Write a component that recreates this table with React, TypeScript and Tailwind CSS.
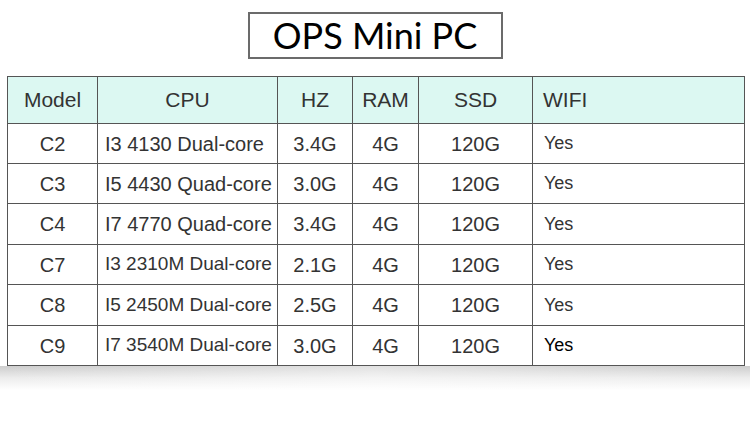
import React from "react";

const rows = [
  ["C2", "I3 4130 Dual-core", "3.4G", "4G", "120G", "Yes"],
  ["C3", "I5 4430 Quad-core", "3.0G", "4G", "120G", "Yes"],
  ["C4", "I7 4770 Quad-core", "3.4G", "4G", "120G", "Yes"],
  ["C7", "I3 2310M Dual-core", "2.1G", "4G", "120G", "Yes"],
  ["C8", "I5 2450M Dual-core", "2.5G", "4G", "120G", "Yes"],
  ["C9", "I7 3540M Dual-core", "3.0G", "4G", "120G", "Yes"],
];
const heights = ["h-[40px]", "h-[40px]", "h-[41px]", "h-[40px]", "h-[41px]", "h-[40px]"];

export default function App() {
  return (
    <div className="w-[750px] h-[432px] bg-white flex flex-col relative overflow-hidden">
      <div className="mx-auto mt-[12px] w-[255px] h-[47px] border-2 border-[#6b6b6b] flex items-center justify-center">
        <span className="text-[36px] leading-none text-black pb-[2px]" style={{ fontFamily: "Lato, 'Open Sans', sans-serif" }}>
          OPS Mini PC
        </span>
      </div>
      <div className="ml-[7px] mt-[17px] w-[738px]">
        <table
          className="border-collapse w-[738px] text-[#333] table-fixed"
          style={{ fontFamily: "'Liberation Sans', Arial, sans-serif" }}
        >
          <colgroup>
            <col className="w-[90px]" />
            <col className="w-[180px]" />
            <col className="w-[75px]" />
            <col className="w-[66px]" />
            <col className="w-[114px]" />
            <col className="w-[212px]" />
          </colgroup>
          <thead>
            <tr className="h-[47px] bg-[#dcf8f2] text-[21px]">
              <th className="border border-[#555] font-normal text-center">Model</th>
              <th className="border border-[#555] font-normal text-center">CPU</th>
              <th className="border border-[#555] font-normal text-center">HZ</th>
              <th className="border border-[#555] font-normal text-center">RAM</th>
              <th className="border border-[#555] font-normal text-center">SSD</th>
              <th className="border border-[#555] font-normal text-left pl-[10px]">WIFI</th>
            </tr>
          </thead>
          <tbody>
            {rows.map((r, i) => (
              <tr key={r[0]} className={`${heights[i]} text-[20px]`}>
                <td className="border border-[#555] text-center">{r[0]}</td>
                <td className={`border border-[#555] text-left pl-[7px] whitespace-nowrap ${i >= 3 ? "text-[19px]" : ""}`}>{r[1]}</td>
                <td className="border border-[#555] text-center">{r[2]}</td>
                <td className="border border-[#555] text-center">{r[3]}</td>
                <td className="border border-[#555] text-center">{r[4]}</td>
                <td className={`border border-[#555] text-left pl-[11px] text-[18px] ${i === 5 ? "text-black" : ""}`}>{r[5]}</td>
              </tr>
            ))}
          </tbody>
        </table>
      </div>
      <div className="relative h-[24px]">
        <div className="absolute inset-0 bg-gradient-to-b from-[#cdcdcd] via-[#ededed] to-white" />
        <div className="absolute inset-0 bg-gradient-to-r from-transparent via-white/40 to-transparent" />
      </div>
    </div>
  );
}
